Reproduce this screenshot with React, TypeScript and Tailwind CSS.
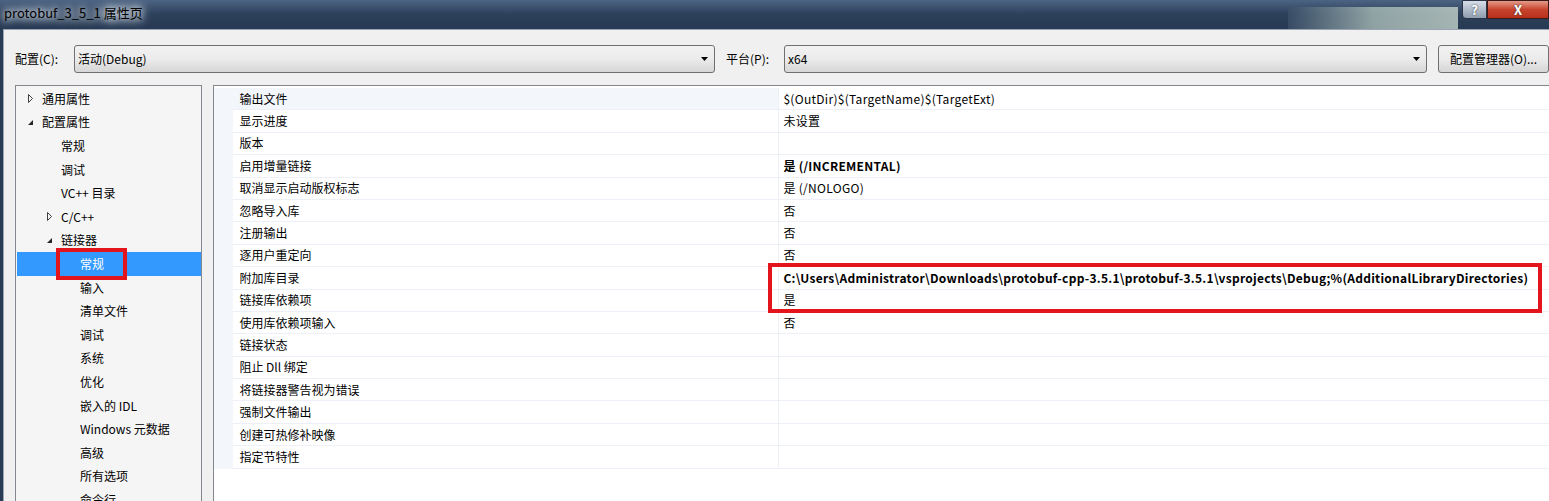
import React from "react"

const FONT = { fontFamily: '"Noto Sans CJK SC", "Noto Sans", sans-serif' }

type TreeItem = { label: string; level: number; arrow?: "open" | "closed"; selected?: boolean }

const TREE: TreeItem[] = [
  { label: "通用属性", level: 0, arrow: "closed" },
  { label: "配置属性", level: 0, arrow: "open" },
  { label: "常规", level: 1 },
  { label: "调试", level: 1 },
  { label: "VC++ 目录", level: 1 },
  { label: "C/C++", level: 1, arrow: "closed" },
  { label: "链接器", level: 1, arrow: "open" },
  { label: "常规", level: 2, selected: true },
  { label: "输入", level: 2 },
  { label: "清单文件", level: 2 },
  { label: "调试", level: 2 },
  { label: "系统", level: 2 },
  { label: "优化", level: 2 },
  { label: "嵌入的 IDL", level: 2 },
  { label: "Windows 元数据", level: 2 },
  { label: "高级", level: 2 },
  { label: "所有选项", level: 2 },
  { label: "命令行", level: 2 },
]

type Row = { name: string; value: string; bold?: boolean }

const ROWS: Row[] = [
  { name: "输出文件", value: "$(OutDir)$(TargetName)$(TargetExt)" },
  { name: "显示进度", value: "未设置" },
  { name: "版本", value: "" },
  { name: "启用增量链接", value: "是 (/INCREMENTAL)", bold: true },
  { name: "取消显示启动版权标志", value: "是 (/NOLOGO)" },
  { name: "忽略导入库", value: "否" },
  { name: "注册输出", value: "否" },
  { name: "逐用户重定向", value: "否" },
  {
    name: "附加库目录",
    value: "C:\\Users\\Administrator\\Downloads\\protobuf-cpp-3.5.1\\protobuf-3.5.1\\vsprojects\\Debug;%(AdditionalLibraryDirectories)",
    bold: true,
  },
  { name: "链接库依赖项", value: "是" },
  { name: "使用库依赖项输入", value: "否" },
  { name: "链接状态", value: "" },
  { name: "阻止 Dll 绑定", value: "" },
  { name: "将链接器警告视为错误", value: "" },
  { name: "强制文件输出", value: "" },
  { name: "创建可热修补映像", value: "" },
  { name: "指定节特性", value: "" },
]

function Arrow({ kind }: { kind: "open" | "closed" }) {
  if (kind === "open") {
    return (
      <svg width="7" height="7" viewBox="0 0 7 7">
        <path d="M6 1 L6 6 L1 6 Z" fill="#262626" />
      </svg>
    )
  }
  return (
    <svg width="7" height="9" viewBox="0 0 7 9">
      <path d="M1.5 0.5 L5.5 4.5 L1.5 8.5 Z" fill="none" stroke="#404040" strokeWidth="1" />
    </svg>
  )
}

function Combo({ text, width }: { text: string; width: string }) {
  return (
    <div
      className={`${width} h-[28px] flex items-center rounded-[3px] border border-[#707070] bg-gradient-to-b from-[#f2f2f2] via-[#ebebeb] to-[#d6d6d6] pl-[3px] pr-[6px]`}
    >
      <span className="flex-1 text-[12px] text-black">{text}</span>
      <svg width="7" height="4" viewBox="0 0 7 4">
        <path d="M0 0 L7 0 L3.5 4 Z" fill="#000" />
      </svg>
    </div>
  )
}

export default function App() {
  return (
    <div style={FONT} className="w-[1549px] h-[501px] overflow-hidden bg-[#293c55] flex flex-col">
      {/* title bar */}
      <div className="h-[29px] shrink-0 flex items-start relative bg-gradient-to-b from-[#4c6483] via-[#2c405a] to-[#263a54]">
        <div className="pl-[4px] pt-[4px] text-[13px] leading-[18px] text-black [text-shadow:0_0_6px_#dfe6ef,0_0_10px_#dfe6ef,0_0_12px_#dfe6ef]">
          protobuf_3_5_1 属性页
        </div>
        <div className="flex-1" />
        <div className="w-[170px] h-[22px] mt-[7px] mr-[4px] bg-gradient-to-r from-[#3b5068] via-[#a9bbb6] to-[#c3d3ca] opacity-80" />
        <div className="flex h-[19px]">
          <div className="w-[25px] h-[19px] rounded-bl-[4px] border border-[#2a3446] bg-gradient-to-b from-[#d7dee8] to-[#8f9dae] flex items-center justify-center text-[13px] font-bold text-white [text-shadow:0_0_2px_#333]">
            ?
          </div>
          <div className="w-[62px] h-[19px] border border-[#3b1a16] bg-gradient-to-b from-[#e49a8a] via-[#c7432c] to-[#b8301c] flex items-center justify-center text-[13px] font-bold text-white [text-shadow:0_0_2px_#333]">
            X
          </div>
        </div>
      </div>

      {/* body */}
      <div className="flex-1 ml-[3px] bg-[#f0f0f0] border-l border-t border-[#9aa4b2] flex flex-col">
        <div className="flex items-center h-[28px] mt-[15px] pl-[11px]">
          <span className="w-[59px] text-[12px] text-black">配置(C):</span>
          <Combo text="活动(Debug)" width="w-[641px]" />
          <span className="ml-[11px] w-[58px] text-[12px] text-black">平台(P):</span>
          <Combo text="x64" width="w-[643px]" />
          <div className="ml-[11px] w-[111px] h-[28px] rounded-[3px] border border-[#707070] bg-gradient-to-b from-[#f2f2f2] via-[#ebebeb] to-[#d6d6d6] flex items-center justify-center text-[12px] text-black">
            配置管理器(O)...
          </div>
        </div>

        <div className="flex mt-[12px] pl-[11px] flex-1 min-h-0">
          {/* tree */}
          <div className="w-[188px] border border-[#828790] bg-[#f5f5f5] pt-[1px] pl-[1px] overflow-hidden">
            {TREE.map((t, i) => (
              <div
                key={i}
                className={`h-[23.6px] flex items-center text-[12px] whitespace-nowrap ${
                  t.selected ? "bg-[#3399ff] text-white relative" : "text-black"
                }`}
                style={{ paddingLeft: 10 + t.level * 19 }}
              >
                <span className="w-[15px] shrink-0 flex items-center">{t.arrow && <Arrow kind={t.arrow} />}</span>
                <span>{t.label}</span>
                {t.selected && (
                  <div className="absolute left-[39px] top-[-4px] w-[71px] h-[32px] border-[4px] border-[#e4141c]" />
                )}
              </div>
            ))}
          </div>

          {/* property grid */}
          <div className="ml-[11px] w-[1340px] border-l border-t border-[#828790] bg-white pt-[2px] relative">
            {ROWS.map((r, i) => (
              <div key={i} className="h-[22.4px] flex text-[12px] text-black">
                <div className="w-[19px] bg-[#f3f6fb]" />
                <div
                  className={`w-[545px] flex items-center pl-[6px] border-b border-[#edf1f7] ${
                    i === 0 ? "bg-[#f3f6fb]" : ""
                  }`}
                >
                  {r.name}
                </div>
                <div
                  className={`flex-1 flex items-center pl-[4px] border-l border-b border-[#edf1f7] whitespace-nowrap ${
                    r.bold ? "font-bold tracking-[0.27px]" : "tracking-[0.3px]"
                  }`}
                >
                  {r.value}
                </div>
              </div>
            ))}
            <div className="absolute left-[554px] top-[177px] w-[774px] h-[50px] border-[4px] border-[#e4141c]" />
          </div>
        </div>
      </div>
    </div>
  )
}
